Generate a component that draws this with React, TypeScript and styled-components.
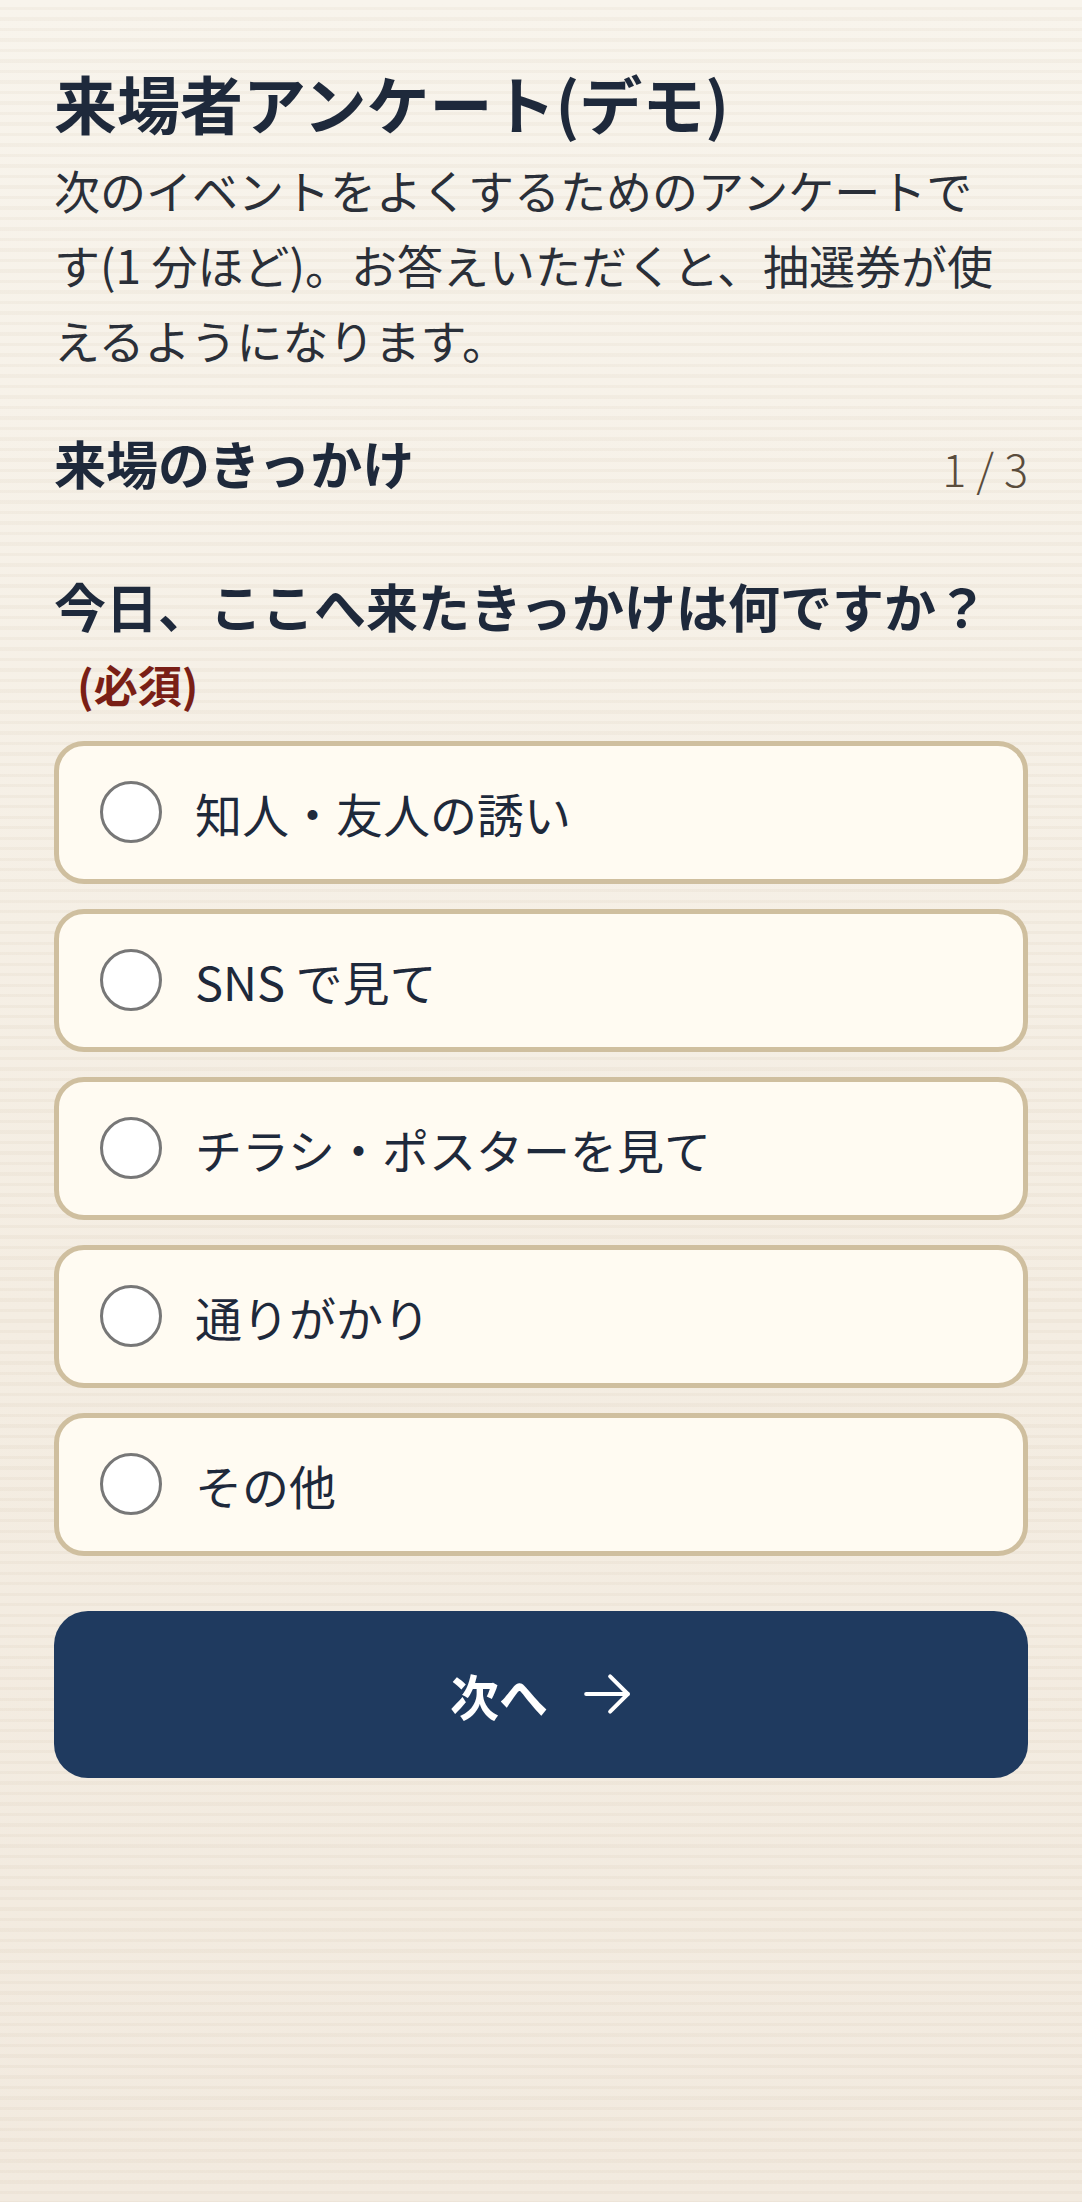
import React from 'react'
import styled, { createGlobalStyle } from 'styled-components'

const GlobalStyle = createGlobalStyle`
  html, body {
    margin: 0;
    padding: 0;
  }
  body {
    font-family: "Noto Sans CJK JP", "Noto Sans", sans-serif;
    color: #1e293b;
    background-color: #f5efe5;
    background-image:
      repeating-linear-gradient(
        180deg,
        rgba(150, 120, 80, 0) 0px,
        rgba(150, 120, 80, 0) 7px,
        rgba(150, 120, 80, 0.05) 7px,
        rgba(150, 120, 80, 0.05) 10.5px
      ),
      linear-gradient(180deg, #f8f4ec 0%, #f4ede2 60%, #f2eadf 100%);
  }
`

const Page = styled.main`
  box-sizing: border-box;
  min-height: 2202px;
  padding: 61px 54px 120px;
  display: flex;
  flex-direction: column;
`

const Title = styled.h1`
  margin: 0;
  font-size: 63px;
  line-height: 1.3;
  font-weight: 700;
  color: #1e293b;
`

const Lead = styled.p`
  margin: 9px 0 0;
  max-width: 964px;
  font-size: 46px;
  line-height: 75px;
  font-weight: 400;
  color: #2a2f38;
`

const SectionHead = styled.div`
  margin-top: 44px;
  display: flex;
  align-items: center;
  justify-content: space-between;
`

const SectionTitle = styled.h2`
  margin: 0;
  font-size: 52px;
  line-height: 73px;
  font-weight: 700;
  color: #1e293b;
`

const Step = styled.span`
  font-size: 45px;
  line-height: 73px;
  font-weight: 300;
  color: #5a4c3c;
  margin-top: 10px;
`

const Question = styled.h3`
  margin: 64px 0 0;
  font-size: 52px;
  line-height: 75px;
  font-weight: 700;
  color: #1e293b;
`

const Required = styled.span`
  margin-left: 23px;
  font-size: 44px;
  color: #7a1f16;
`

const Options = styled.div`
  margin-top: 19px;
  display: flex;
  flex-direction: column;
  gap: 25px;
`

const Option = styled.label`
  box-sizing: border-box;
  height: 143px;
  display: flex;
  align-items: center;
  gap: 33px;
  padding: 0 41px;
  background: #fffbf2;
  border: 5px solid #cfbf9f;
  border-radius: 30px;
  cursor: pointer;
`

const Radio = styled.span`
  box-sizing: border-box;
  width: 62px;
  height: 62px;
  flex: none;
  border-radius: 50%;
  border: 3px solid #777;
  background: #ffffff;
`

const OptionText = styled.span`
  font-size: 47px;
  line-height: 1.3;
  color: #1e293b;
`

const NextButton = styled.button`
  margin-top: 55px;
  height: 167px;
  width: 100%;
  border: none;
  border-radius: 34px;
  background: #1f3a5f;
  color: #ffffff;
  font-family: inherit;
  font-size: 49px;
  font-weight: 700;
  display: flex;
  align-items: center;
  justify-content: center;
  gap: 34px;
  cursor: pointer;
`

const Arrow = () => (
  <svg width="50" height="50" viewBox="0 0 24 24" fill="none" stroke="#ffffff" strokeWidth="1.9" strokeLinecap="round" strokeLinejoin="round">
    <path d="M2 12h20" />
    <path d="M13.5 3.5l8.5 8.5-8.5 8.5" />
  </svg>
)

const choices = ['知人・友人の誘い', 'SNS で見て', 'チラシ・ポスターを見て', '通りがかり', 'その他']

export default function App() {
  return (
    <>
      <GlobalStyle />
      <Page>
        <Title>来場者アンケート(デモ)</Title>
        <Lead>次のイベントをよくするためのアンケートです(1 分ほど)。お答えいただくと、抽選券が使えるようになります。</Lead>

        <SectionHead>
          <SectionTitle>来場のきっかけ</SectionTitle>
          <Step>1 / 3</Step>
        </SectionHead>

        <Question>
          今日、ここへ来たきっかけは何ですか？<Required>(必須)</Required>
        </Question>

        <Options>
          {choices.map((c) => (
            <Option key={c}>
              <Radio />
              <OptionText>{c}</OptionText>
            </Option>
          ))}
        </Options>

        <NextButton type="button">
          <span>次へ</span>
          <Arrow />
        </NextButton>
      </Page>
    </>
  )
}
